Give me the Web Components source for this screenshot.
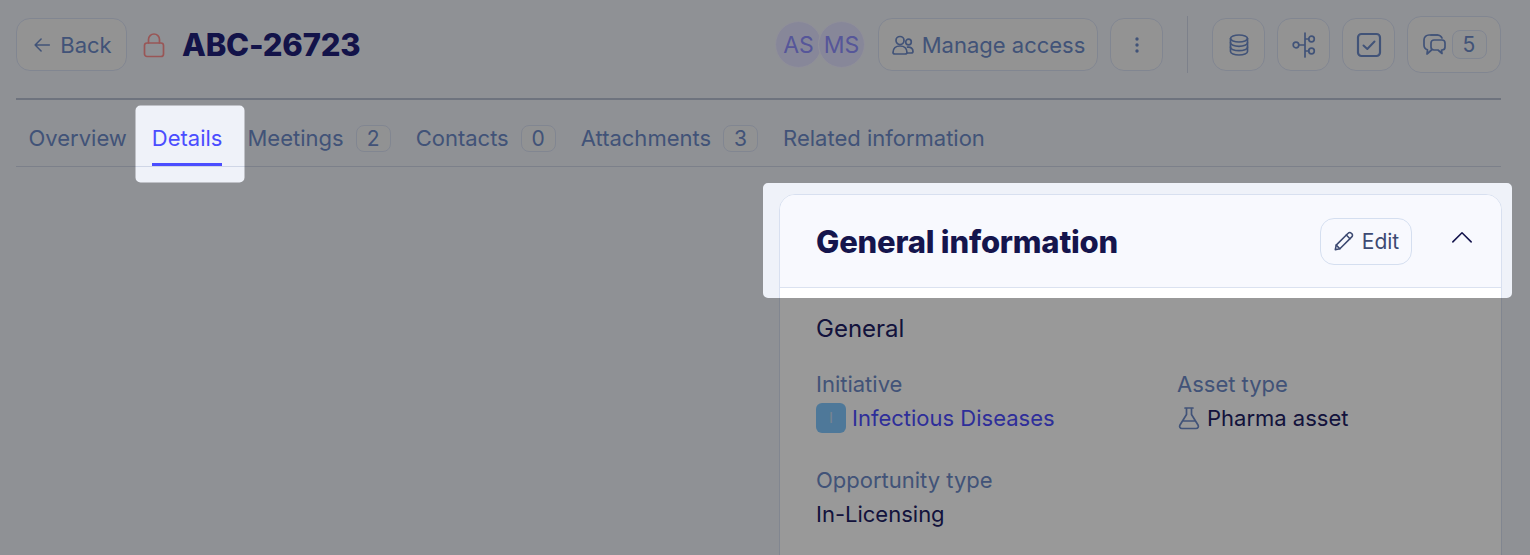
<!DOCTYPE html>
<html lang="en">
<head>
<meta charset="utf-8">
<title>ABC-26723</title>
<style>
html,body{margin:0;height:555px;overflow:hidden;background:#eff2f9}
body{font-family:Inter,"Noto Sans",sans-serif;position:relative}
</style>
</head>
<body>
<app-page>
  <top-bar slot="top">
    <ui-btn slot="left" style="width:111px"><ui-icon name="back" size="22"></ui-icon><span>Back</span></ui-btn>
    <ui-icon slot="left" name="lock" size="26" style="color:#ff9090;margin-left:14px"></ui-icon>
    <page-title slot="left">ABC-26723</page-title>
    <user-avatar slot="right">AS</user-avatar>
    <user-avatar slot="right" style="margin-left:-4px;margin-right:13px">MS</user-avatar>
    <ui-btn slot="right" style="width:220px"><ui-icon name="users" size="24"></ui-icon><span>Manage access</span></ui-btn>
    <ui-btn slot="right" style="width:53px;margin-left:12px"><ui-icon name="dots" size="22"></ui-icon></ui-btn>
    <v-rule slot="right"></v-rule>
    <ui-btn slot="right" style="width:53px"><ui-icon name="db" size="24"></ui-icon></ui-btn>
    <ui-btn slot="right" style="width:53px;margin-left:12px"><ui-icon name="tree" size="26"></ui-icon></ui-btn>
    <ui-btn slot="right" style="width:53px;margin-left:12px"><ui-icon name="check" size="26"></ui-icon></ui-btn>
    <ui-btn slot="right" style="width:94px;height:57px;margin-left:12px;gap:6px"><ui-icon name="chat" size="24"></ui-icon><count-badge style="height:29px;width:35px">5</count-badge></ui-btn>
  </top-bar>
  <tab-bar slot="tabs">
    <tab-item>Overview</tab-item>
    <tab-item active>Details</tab-item>
    <tab-item>Meetings<count-badge>2</count-badge></tab-item>
    <tab-item>Contacts<count-badge>0</count-badge></tab-item>
    <tab-item>Attachments<count-badge>3</count-badge></tab-item>
    <tab-item>Related information</tab-item>
  </tab-bar>
  <info-card slot="card" heading="General information">
    <section-title>General</section-title>
    <field-grid>
      <info-field label="Initiative"><initial-tile>I</initial-tile><a-link>Infectious Diseases</a-link></info-field>
      <info-field label="Asset type"><ui-icon name="flask" size="24" style="margin-right:6px;color:#6d8ac8"></ui-icon><span>Pharma asset</span></info-field>
      <info-field label="Opportunity type"><span>In-Licensing</span></info-field>
    </field-grid>
  </info-card>
</app-page>
<tour-overlay></tour-overlay>

<script>
const def=(name,css,html,init)=>{
  customElements.define(name,class extends HTMLElement{
    constructor(){super();const r=this.attachShadow({mode:'open'});r.innerHTML='<style>'+css+'</style>'+html;}
    connectedCallback(){init&&init.call(this,this.shadowRoot);}
  });
};
const ICONS={
 back:'<path d="M20 12H4.5M11 5.5 4.5 12l6.500 6.500"/>',
 lock:'<rect x="3.500" y="11" width="19" height="13.500" rx="2.500"/><path d="M7.500 11V7.500a5.500 5.500 0 0 1 11 0V11"/>',
 users:'<circle cx="9" cy="7.500" r="4"/><circle cx="17.500" cy="9" r="2.800"/><path d="M2 19.500c0-4 3-6.500 7-6.500s7 2.500 7 6.500c0 1-1 1.500-2 1.500H4c-1 0-2-.5-2-1.500z"/><path d="M16.500 14.200c3-.5 5.500 1.200 5.500 4 0 1-.7 1.800-1.800 1.800H16.500"/>',
 dots:'<g fill="currentColor" stroke="none"><circle cx="11" cy="5" r="1.700"/><circle cx="11" cy="11" r="1.700"/><circle cx="11" cy="17" r="1.700"/></g>',
 db:'<ellipse cx="12" cy="5.500" rx="8.500" ry="3.500"/><path d="M3.500 5.500v13c0 2 3.800 3.500 8.500 3.500s8.500-1.500 8.500-3.500v-13"/><path d="M3.500 9.800c0 2 3.800 3.500 8.500 3.500s8.500-1.500 8.500-3.500M3.500 14.200c0 2 3.800 3.500 8.500 3.500s8.500-1.500 8.500-3.500"/>',
 tree:'<path d="M14 1v24M8 13h6M14 7h4M14 19h4"/><circle cx="5" cy="13" r="2.800"/><circle cx="20.500" cy="7" r="2.800"/><circle cx="20.500" cy="19" r="2.800"/>',
 check:'<rect x="2" y="2" width="22" height="22" rx="3.500" stroke-width="2.200"/><path d="M7.500 13.500l3.800 3.500 7.200-7.500" stroke-width="2"/>',
 chat:'<path d="M9 2h6.500A5 5 0 0 1 20 5"/><path d="M15.500 2H7a5 5 0 0 0-5 5v5a5 5 0 0 0 3.500 4.800L5 21l4.500-4"/><path d="M12 7h8a3 3 0 0 1 3 3v4a3 3 0 0 1-3 3h-.5l.5 3.500-4-3.500h-4a3 3 0 0 1-3-3v-4a3 3 0 0 1 3-3z"/>',
 flask:'<path d="M8 2h8M9.500 2v6.500L3 19c-1 1.800 0 3.500 2 3.500h14c2 0 3-1.700 2-3.500L14.500 8.500V2M5.500 15h13"/>',
 pencil:'<path d="M2.500 21.500l1-5L16.500 3.500a2.400 2.400 0 0 1 3.500 0l.5.500a2.400 2.400 0 0 1 0 3.500L7.500 20.500z"/><path d="M14.500 5.500l4 4M3.500 16.500l4 4"/>',
 up:'<path d="M2 13 12 3l10 10"/>'
};
def('ui-icon',':host{display:inline-flex;flex:none;color:inherit}svg{display:block;fill:none;stroke:currentColor;stroke-width:1.700;stroke-linecap:round;stroke-linejoin:round}','<svg></svg>',function(r){
  const s=+this.getAttribute('size')||24,n=this.getAttribute('name'),svg=r.querySelector('svg');
  const vb={lock:26,tree:26,check:26,dots:22}[n]||24;
  svg.setAttribute('width',s);svg.setAttribute('height',s);svg.setAttribute('viewBox','0 0 '+vb+' '+vb);svg.innerHTML=ICONS[n];
});
def('app-page',`:host{display:block;height:555px;overflow:hidden;box-sizing:border-box;padding:0 29px 0 16px}
 .card{display:grid;grid-template-columns:763px 1fr;margin-top:27px;margin-right:-1px}`,
 '<slot name="top"></slot><slot name="tabs"></slot><div class="card"><div></div><slot name="card"></slot></div>');
def('top-bar',`:host{display:flex;justify-content:space-between;align-items:center;height:82px;box-sizing:border-box;padding-bottom:25px;padding-top:16px;height:100px;border-bottom:2px solid #b7c0d2}
 .g{display:flex;align-items:center}`,
 '<div class="g"><slot name="left"></slot></div><div class="g"><slot name="right"></slot></div>');
def('ui-btn',`:host{display:inline-flex;align-items:center;justify-content:center;gap:7px;box-sizing:border-box;height:53px;border:1px solid #d8e0f2;border-radius:14px;background:#f6f6f6;color:#6d8ac8;font-size:22px;flex:none}`,'<slot></slot>');
def('page-title',':host{display:block;margin-left:15px;font-size:31px;font-weight:800;color:#20207a;letter-spacing:-.2px;white-space:nowrap}','<slot></slot>');
def('user-avatar',`:host{display:flex;align-items:center;justify-content:center;box-sizing:border-box;width:47px;height:47px;border-radius:50%;background:#e2e2ff;border:1px solid #f0f0ff;color:#8f90ff;font-size:23px;flex:none;position:relative}`,'<slot></slot>');
def('v-rule',':host{display:block;width:1px;height:57px;background:#d0d8e8;margin:0 24px}','');
def('tab-bar',':host{display:flex;height:67px;box-sizing:border-box;border-bottom:1px solid #cfd6e6}','<slot></slot>');
def('tab-item',`:host{display:flex;align-items:center;gap:12px;box-sizing:border-box;height:66px;padding:10px 12.500px 0;font-size:22px;color:#6d8ac8;position:relative;white-space:nowrap}
 :host([active]){color:#4a4dff}
 :host([active])::after{content:"";position:absolute;left:12.500px;right:12.500px;bottom:0;height:3px;background:#4a4dff}`,'<slot></slot>');
def('count-badge',`:host{display:inline-flex;align-items:center;justify-content:center;box-sizing:border-box;min-width:35px;height:27px;padding:0 4px;border:1px solid #d8e0f2;border-radius:8px;background:#f2f3f6;color:#6d8ac8;font-size:21px;flex:none}`,'<slot></slot>');
def('info-card',`:host{display:block;height:600px;box-sizing:border-box;background:#fff;border:1px solid #d8e0f0;border-radius:16px;overflow:hidden}
 header{display:flex;align-items:center;height:93px;box-sizing:border-box;padding:0 28px 0 36px;background:#f8f9fe;border-bottom:1px solid #dbe2f0}
 h2{margin:0;flex:1;font-size:31px;font-weight:800;color:#15154d;font-family:Inter,sans-serif;letter-spacing:-.2px}
 .edit{display:flex;align-items:center;justify-content:center;gap:7px;width:92px;height:47px;box-sizing:border-box;border:1px solid #d5dff0;border-radius:14px;color:#3d4a72;font-size:21px;margin-right:39px}
 .body{padding:26px 36px}`,
 '<header><h2></h2><div class="edit"><ui-icon name="pencil" size="22"></ui-icon><span>Edit</span></div><ui-icon name="up" size="22" style="color:#15154d"></ui-icon></header><div class="body"><slot></slot></div>',
 function(r){r.querySelector('h2').textContent=this.getAttribute('heading');});
def('section-title',':host{display:block;font-size:24px;line-height:30px;color:#212164}','<slot></slot>');
def('field-grid',':host{display:grid;grid-template-columns:361px 1fr;grid-auto-rows:96px;margin-top:25px}','<slot></slot>');
def('info-field',`:host{display:block;color:#212164;font-size:22px}
 .l{color:#6d8ac8;line-height:30px}.v{display:flex;align-items:center;line-height:32px;margin-top:3px}`,
 '<div class="l"></div><div class="v"><slot></slot></div>',function(r){r.querySelector('.l').textContent=this.getAttribute('label');});
def('initial-tile',':host{display:inline-flex;align-items:center;justify-content:center;width:30px;height:30px;border-radius:6px;background:#82c8ff;color:#c8dcf0;font-size:15px;margin-right:6px;flex:none}','<slot></slot>');
def('a-link',':host{color:#4e4eff}','<slot></slot>');
const rr=(x0,y0,x1,y1,r)=>`M${x0+r} ${y0}H${x1-r}A${r} ${r} 0 0 1 ${x1} ${y0+r}V${y1-r}A${r} ${r} 0 0 1 ${x1-r} ${y1}H${x0+r}A${r} ${r} 0 0 1 ${x0} ${y1-r}V${y0+r}A${r} ${r} 0 0 1 ${x0+r} ${y0}Z`;
def('tour-overlay',':host{position:absolute;inset:0;display:block;background:rgba(0,0,0,.4)}','',function(){
  this.style.clipPath=`path(evenodd,'M0 0H1530V555H0Z${rr(135.5,105.5,244.5,182.5,5)}${rr(763,183,1512,298,5)}')`;
});
</script>
</body>
</html>
